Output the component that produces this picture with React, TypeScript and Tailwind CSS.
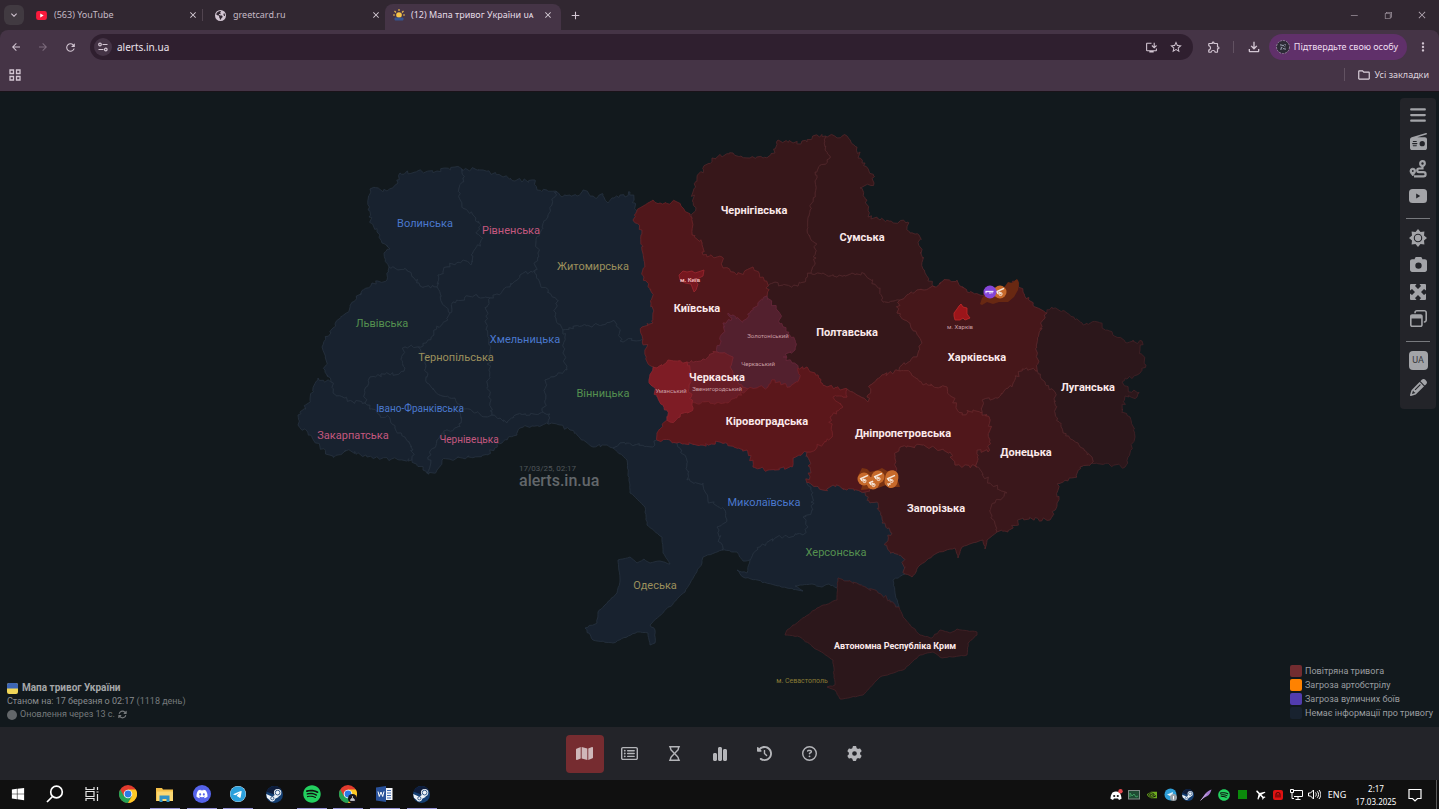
import React from "react";
import {
  FaBars,
  FaCamera,
  FaChartSimple,
  FaClockRotateLeft,
  FaGear,
  FaMap,
  FaPencil,
  FaRadio,
  FaRegCircleQuestion,
  FaRegHourglass,
  FaRegRectangleList,
  FaRegWindowRestore,
  FaRotate,
  FaSpotify,
  FaSteam,
  FaTelegram,
  FaWindows,
  FaDiscord,
  FaEarthAmericas,
} from "react-icons/fa6";
import {
  MdArrowBack,
  MdArrowForward,
  MdClose,
  MdAdd,
  MdExpandMore,
  MdInstallDesktop,
  MdMoreVert,
  MdOutlineExtension,
  MdOutlineFileDownload,
  MdOutlineFolder,
  MdRefresh,
  MdStarBorder,
  MdFlight,
} from "react-icons/md";
import { VscChromeClose, VscChromeMinimize, VscChromeRestore } from "react-icons/vsc";
import { SiNvidia } from "react-icons/si";

/* ---------- Map geometry: shared borders, joined into regions ---------- */

const BORDERS: Record<string, string> = {
  volOut: "462,169 455,167 437,171 415,172 400,173 398,183 387,191 370,189 368,200 369,217 377,232 382,243 390,249 384,253 389,267",
  volLvi: "389,267 398,270 407,270 413,277 420,286 437,287",
  volRiv: "462,169 463,178 459,192 462,207 473,215 481,225 476,233 483,238 473,253 471,265 463,260 447,267 438,275 437,287",
  rivOut: "462,169 483,170 503,177 523,181 535,180 537,190 557,192",
  rivZhy: "557,192 552,205 548,217 540,233 536,240 538,253 535,270",
  rivKhm: "535,270 520,275 510,287 490,298",
  rivTer: "490,298 477,295 453,302 450,313",
  rivLvi: "450,313 442,303 440,293 437,287",
  lviTer: "450,313 448,320 435,330 428,340 418,347",
  lviIf: "418,347 405,347 402,357 405,368 400,373 370,377 366,387 365,403",
  lviZak: "365,403 353,402 333,393 331,382",
  lviOut: "389,267 387,280 372,283 353,302 333,328 322,347 326,360 325,370 331,382",
  zakOut: "331,382 318,378 310,400 298,415 298,425 310,435 320,447 333,457 348,450 367,457 400,460 412,460",
  zakIf: "365,403 380,415 390,418 395,428 405,437 413,450 412,460",
  ifOut: "412,460 423,470 429,474",
  ifChe: "429,474 430,467 428,457 437,440 447,430 460,427 460,409",
  ifTer: "418,347 425,353 427,383 440,395 455,398 460,409",
  cheTer: "460,409 473,412 487,417 492,415",
  terKhm: "490,298 487,307 487,327 490,353 488,380 490,403 492,415",
  cheKhm: "492,415 500,418 507,423 515,415 530,415 543,412",
  cheVin: "543,412 550,414 548,424",
  cheOut: "429,474 437,470 442,460 487,455 497,443 517,435 520,428 532,426 548,424",
  khmVin: "543,412 545,403 545,380 567,370 563,353 565,337 563,330",
  khmZhy: "535,270 540,283 548,293 557,300 555,317 563,330",
  zhyVin: "563,330 587,326 615,322 620,330 620,341 643,339",
  zhyOut: "557,192 562,197 570,195 577,196 583,190 590,196 597,198 603,194 608,203 614,198 620,195 625,197 630,192 635,203 637,211",
  zhyKyi: "637,211 633,220 642,230 642,250 644,277 652,293 653,313 653,323 642,327 643,339",
  vinKyi: "643,339 647,347 646,358 653,370",
  vinUma: "653,370 649,380 657,397 667,410 667,420",
  vinKir: "667,420 657,433 657,440",
  vinOde: "657,440 653,447 620,443 613,448",
  vinOut: "548,424 560,425 570,430 580,438 593,447 607,445 613,448",
  kyiOut: "637,211 648,203 653,200 660,203 677,202 683,208 692,218",
  kyiChn: "692,218 692,235 702,243 703,255 722,257 723,268 737,275 753,267 768,286",
  kyiPol: "768,286 767,296",
  kyiZol: "767,296 758,303 750,313 743,322 733,315 728,313 732,318 723,323 723,333 717,352",
  kyiZve: "717,352 703,359 687,362",
  kyiUma: "687,362 667,362 657,368 653,370",
  umaZve: "687,362 690,370 689,385 692,403",
  umaKir: "692,403 693,408 680,417 670,422 667,420",
  zveKir: "692,403 728,403 738,395 748,389",
  zolZve: "717,352 723,353 733,357 730,367 735,377 743,388 748,389",
  zolPol: "767,296 777,310 783,327 795,342 795,350 783,357 792,363 798,368",
  zolKir: "798,368 800,377 790,387 775,380 768,387 757,388 748,389",
  kirPol: "798,368 807,367 818,375 822,383 827,387 847,389",
  kirDni: "847,389 847,397 833,397 843,407 830,417 832,437 817,447 807,452",
  kirMyk: "807,452 803,453 793,458 792,467 768,470 753,467 747,450 720,442 700,445 677,443",
  kirOde: "677,443 670,440 657,440",
  mykOde: "677,443 687,463 687,480 703,483 708,500 725,510 727,520 717,527 722,550",
  dniMyk: "807,452 810,467 807,483",
  dniKhe: "807,483 823,490 833,485 847,490 865,492",
  mykKhe: "807,483 813,493 813,510 803,517 808,527 803,535 777,537 760,547 750,560",
  mykOut: "722,550 737,552 743,561 750,560",
  odeOut: "722,550 703,557 702,563 685,592 650,625 655,630 655,643 650,645 648,633 637,632 613,643 593,640 585,628 597,623 598,612 617,593 620,580 618,560 630,557 637,563 644,559 650,563 660,561 670,564 663,553 662,537 647,525 645,507 630,493 627,460 613,448",
  kheZap: "865,492 870,503 877,502 882,523 892,533 885,545 890,553 903,558 905,574",
  kheAzo: "905,574 893,580 895,593 899,607",
  kheCri: "899,607 890,602 878,593 860,585 838,578",
  kheOut: "838,578 837,588 829,584 822,587 812,584 795,586 803,591 787,588 743,577 737,570 747,573 750,560",
  criOut: "899,607 903,617 920,635 932,638 940,630 950,633 957,629 977,632 977,635 968,643 967,655 942,658 933,652 920,655 903,670 880,677 863,695 840,699 835,690 827,687 835,685 833,660 813,647 800,637 785,635 787,630 817,608 837,600 838,578",
  chnOut: "692,218 695,207 693,192 697,177 712,158 733,153 750,158 763,158 775,153 778,140 793,143 807,142 817,135 826,136",
  chnSum: "826,136 825,150 830,158 815,172 815,193 810,210 807,230 815,243 815,263 811,273",
  chnPol: "811,273 798,286 783,285 775,282 768,286",
  sumOut: "826,136 847,136 857,147 862,163 873,175 874,183 860,188 867,200 868,217 880,220 907,222 910,233 919,235 920,247 925,273 935,287",
  sumKha: "935,287 917,290 900,300",
  sumPol: "811,273 823,273 837,277 852,273 865,274 880,290 883,302 900,300",
  polKha: "900,300 897,313 910,323 922,343 917,357 902,365 900,371",
  polDni: "900,371 883,375 870,385 868,402 857,395 847,389",
  khaOut: "935,287 943,281 957,280 967,292 980,295 1003,288 1017,280 1023,292 1033,305 1047,313",
  khaDni: "900,371 910,372 923,385 947,387 952,397 962,415 973,410 982,412",
  khaDon: "982,412 982,400 998,398 1013,383 1022,369 1037,370",
  khaLuh: "1037,370 1037,347 1043,320 1047,313",
  luhOut: "1047,313 1052,307 1067,313 1083,325 1098,322 1107,330 1127,343 1142,341 1140,350 1146,365 1137,375 1122,382 1130,392 1139,392 1137,397 1125,396 1122,413 1130,417 1135,437 1128,457 1125,467 1092,463",
  luhDon: "1037,370 1045,383 1055,392 1055,413 1063,433 1080,447 1092,457 1092,463",
  donOut: "1092,463 1080,467 1077,477 1058,483 1057,503 1050,520 1023,518 1008,532 997,532",
  donZap: "997,532 990,510 995,503 1007,493 990,483 977,467",
  dniDon: "982,412 990,420 990,440 988,452 977,450 977,467",
  dniZap: "977,467 955,465 950,452 940,450 923,445 900,447 895,457 895,477 865,492",
  zapOut: "997,532 987,540 985,549 983,540 962,547 958,558 955,548 937,553 920,565 912,577 905,574",
};

const SMOOTH = new Set(["odeOut", "criOut", "kheOut", "zapOut", "mykOut", "kheAzo"]);

type Point = [number, number];

function roughen(name: string): Point[] {
  const points = BORDERS[name].split(" ").map((p) => p.split(",").map(Number) as Point);
  let seed = name.split("").reduce((s, c) => (s * 31 + c.charCodeAt(0)) % 65521, 7);
  const random = () => {
    seed = (seed * 16807) % 2147483647;
    return seed / 2147483647 - 0.5;
  };
  const size = SMOOTH.has(name) ? 1.2 : 4;
  const out: Point[] = [points[0]];
  for (let i = 1; i < points.length; i++) {
    const [ax, ay] = points[i - 1];
    const [bx, by] = points[i];
    const steps = Math.max(1, Math.round(Math.hypot(bx - ax, by - ay) / 2.5));
    for (let k = 1; k < steps; k++) {
      const t = k / steps;
      out.push([ax + (bx - ax) * t + random() * size, ay + (by - ay) * t + random() * size]);
    }
    out.push([bx, by]);
  }
  return out;
}

const LINES = Object.fromEntries(Object.keys(BORDERS).map((name) => [name, roughen(name)]));

function ring(names: string): string {
  const all = names
    .split(" ")
    .flatMap((n) => (n.startsWith("-") ? [...LINES[n.slice(1)]].reverse() : LINES[n]));
  return "M" + all.map(([x, y]) => `${x.toFixed(1)} ${y.toFixed(1)}`).join("L") + "Z";
}

const CALM = "#18222f";
const CALM_LINE = "#273240";

const REGIONS: { id: string; fill: string; line: string; borders: string }[] = [
  { id: "volyn", fill: CALM, line: CALM_LINE, borders: "volOut volLvi -volRiv" },
  { id: "rivne", fill: CALM, line: CALM_LINE, borders: "rivOut rivZhy rivKhm rivTer rivLvi -volRiv" },
  { id: "lviv", fill: CALM, line: CALM_LINE, borders: "lviOut -lviZak -lviIf -lviTer rivLvi -volLvi" },
  { id: "zakarpattia", fill: CALM, line: CALM_LINE, borders: "zakOut -zakIf lviZak" },
  { id: "ivano-frankivsk", fill: CALM, line: CALM_LINE, borders: "ifOut ifChe -ifTer lviIf zakIf" },
  { id: "ternopil", fill: CALM, line: CALM_LINE, borders: "rivTer lviTer ifTer cheTer -terKhm" },
  { id: "chernivtsi", fill: CALM, line: CALM_LINE, borders: "cheOut -cheVin -cheKhm -cheTer -ifChe" },
  { id: "khmelnytskyi", fill: CALM, line: CALM_LINE, borders: "rivKhm terKhm cheKhm khmVin -khmZhy" },
  { id: "zhytomyr", fill: CALM, line: CALM_LINE, borders: "zhyOut zhyKyi -zhyVin -khmZhy -rivZhy" },
  { id: "vinnytsia", fill: CALM, line: CALM_LINE, borders: "zhyVin vinKyi vinUma vinKir vinOde -vinOut -cheVin khmVin" },
  { id: "odesa", fill: CALM, line: CALM_LINE, borders: "kirOde vinOde -odeOut -mykOde" },
  { id: "mykolaiv", fill: CALM, line: CALM_LINE, borders: "kirMyk mykOde mykOut -mykKhe -dniMyk" },
  { id: "kherson", fill: CALM, line: CALM_LINE, borders: "mykKhe -kheOut -kheCri -kheAzo -kheZap -dniKhe" },
  { id: "crimea", fill: "#2c171b", line: "#452227", borders: "kheCri -criOut" },
  { id: "luhansk", fill: "#2c171b", line: "#452227", borders: "luhOut -luhDon khaLuh" },
  { id: "poltava", fill: "#35171a", line: "#52272b", borders: "sumPol polKha polDni -kirPol -zolPol -kyiPol -chnPol" },
  { id: "sumy", fill: "#35171a", line: "#52272b", borders: "sumOut sumKha -sumPol -chnSum" },
  { id: "chernihiv", fill: "#37171a", line: "#52272b", borders: "chnOut chnSum chnPol -kyiChn" },
  { id: "zaporizhzhia", fill: "#3a171b", line: "#53272b", borders: "kheZap -zapOut donZap dniZap" },
  { id: "donetsk", fill: "#3a171b", line: "#53272b", borders: "luhDon donOut donZap -dniDon khaDon" },
  { id: "kharkiv", fill: "#46171a", line: "#5d272b", borders: "khaOut -khaLuh -khaDon -khaDni -polKha -sumKha" },
  { id: "dnipro", fill: "#50171b", line: "#67262a", borders: "khaDni dniDon dniZap -dniKhe -dniMyk -kirDni -polDni" },
  { id: "kyiv", fill: "#50171b", line: "#6c2327", borders: "kyiOut kyiChn kyiPol kyiZol kyiZve kyiUma -vinKyi -zhyKyi" },
  { id: "cherkasy-east", fill: "#53202e", line: "#66263a", borders: "kyiZol zolZve -zolKir -zolPol" },
  { id: "zvenyhorodka", fill: "#671d26", line: "#7a2630", borders: "kyiZve umaZve zveKir -zolZve" },
  { id: "kirovohrad", fill: "#5b171b", line: "#752127", borders: "kirPol kirDni kirMyk kirOde -vinKir -umaKir zveKir -zolKir" },
  { id: "uman", fill: "#7e1c25", line: "#8e242d", borders: "vinUma -umaKir -umaZve kyiUma" },
];

const BLUE = "#4a78cd";
const PINK = "#c4587f";
const SAND = "#9c905c";
const GREEN = "#55914f";

const QUIET_LABELS: [string, number, number, string, string][] = [
  ["Волинська", 425, 227, BLUE, "text-[11px]"],
  ["Рівненська", 511, 234, PINK, "text-[11px]"],
  ["Житомирська", 593, 270, SAND, "text-[11px]"],
  ["Львівська", 382, 327, GREEN, "text-[11px]"],
  ["Хмельницька", 525, 343, BLUE, "text-[11px]"],
  ["Тернопільська", 456, 361, SAND, "text-[11px]"],
  ["Вінницька", 603, 397, GREEN, "text-[11px]"],
  ["Івано-Франківська", 420, 412, BLUE, "text-[10px]"],
  ["Закарпатська", 353, 439, PINK, "text-[11px]"],
  ["Чернівецька", 469, 443, PINK, "text-[10px]"],
  ["Миколаївська", 764, 506, BLUE, "text-[11px]"],
  ["Херсонська", 836, 556, GREEN, "text-[11px]"],
  ["Одеська", 655, 589, SAND, "text-[11px]"],
  ["м. Севастополь", 802, 683, "#8a7b35", "text-[7px]"],
];

const ALERT_LABELS: [string, number, number][] = [
  ["Чернігівська", 754, 214],
  ["Сумська", 862, 241],
  ["Київська", 697, 312],
  ["Полтавська", 847, 336],
  ["Харківська", 977, 361],
  ["Черкаська", 717, 381],
  ["Луганська", 1088, 391],
  ["Кіровоградська", 767, 425],
  ["Дніпропетровська", 903, 437],
  ["Донецька", 1026, 456],
  ["Запорізька", 936, 512],
];

const SMALL_LABELS: [string, number, number][] = [
  ["Золотоніський", 768, 338],
  ["Черкаський", 758, 366],
  ["Звенигородський", 717, 391],
  ["Уманський", 671, 393],
  ["м. Харків", 960, 329],
];

const APP_FONT = "font-['Roboto','Noto_Sans',sans-serif]";

function Cannon({ x, y, color = "#c76a2b", tall = false }: { x: number; y: number; color?: string; tall?: boolean }) {
  return (
    <g transform={`translate(${x} ${y})`}>
      {tall ? (
        <rect x="-6" y="-9" width="13" height="18" rx="6.5" fill={color} transform="rotate(12)" />
      ) : (
        <circle r="6.5" fill={color} />
      )}
      <path d="M-4 0L4-3.600M-3-1L-2 2M-1 0L1 2" stroke="#f6e6da" strokeWidth="1.500" fill="none" />
      <circle cx="0.500" cy="2" r="1.600" stroke="#f6e6da" fill="none" />
      {tall && <path d="M-4 5h4M-3 7l2-3" stroke="#f6e6da" fill="none" />}
    </g>
  );
}

function AlertMap() {
  return (
    <svg
      viewBox="0 92 1439 635"
      preserveAspectRatio="xMidYMid meet"
      className={`block h-full w-full ${APP_FONT}`}
      role="img"
      aria-label="Мапа тривог України"
    >
      {REGIONS.map((r) => (
        <path key={r.id} d={ring(r.borders)} fill={r.fill} stroke={r.line} strokeWidth="0.800" strokeLinejoin="round" />
      ))}
      <path
        d="M679 275l4-4 4 1 5-1 3 2 6-2 3-1-1 6-6 3-2 2 3 3-2 6-2 2-3-8-6-1-5-3z"
        fill="#76171f"
        stroke="#9a2730"
        strokeWidth="0.800"
      />
      <path d="M954 313l3-4 2-3 2-2 2 3 4 1v6l3 4-5 2-2-2-3 2-5 0-1-4z" fill="#9c151a" stroke="#c22a2a" strokeWidth="0.800" />
      <path d="M980 304l2-6 5-5 16-4 5-7 4 1 5-4 2 4-1 7-4 7-6 5-9 0-6 2-6-2-5 3z" fill="#682812" />
      <path d="M862 468l5 1 3 3 8-2 4-2 5 3 7 1 3 6 3 9-7 0-7-2-8 3-8 1-9 1 2-8-5-6z" fill="#7a3212" />
      <Cannon x={1000} y={292} />
      <g transform="translate(990 292)">
        <circle r="6.500" fill="#8546d8" />
        <path d="M-4.500-.500h8" stroke="#efe6fb" strokeWidth="1.300" fill="none" />
        <path d="M-4-.500v1.800M0 0v2M2 0v1.500" stroke="#efe6fb" fill="none" />
      </g>
      <Cannon x={864} y={479} />
      <Cannon x={873} y={483} />
      <Cannon x={878} y={477} />
      <Cannon x={891} y={479} tall />

      <g textAnchor="middle">
        {QUIET_LABELS.map(([text, x, y, color, size]) => (
          <text key={text} x={x} y={y} fill={color} className={size}>
            {text}
          </text>
        ))}
        {SMALL_LABELS.map(([text, x, y]) => (
          <text key={text} x={x} y={y} fill="#c99ea4" className="text-[6px]">
            {text}
          </text>
        ))}
        <text x="690" y="282" fill="#efb3b6" className="text-[6px] font-bold">
          м. Київ
        </text>
        {ALERT_LABELS.map(([text, x, y]) => (
          <text key={text} x={x} y={y} fill="#fbe9ea" className="text-[11px] font-bold">
            {text}
          </text>
        ))}
        <text x="895" y="649" fill="#fbe9ea" className="text-[9px] font-bold">
          Автономна Республіка Крим
        </text>
      </g>
      <text x="519" y="471" fill="#50565a" className="text-[8px]">
        17/03/25, 02:17
      </text>
      <text x="519" y="486" fill="#62676b" className="text-[16px] font-medium">
        alerts.in.ua
      </text>
    </svg>
  );
}

/* ---------- Browser frame ---------- */

function Sunrise() {
  return (
    <svg viewBox="0 0 12 12" className="size-3">
      <path d="M6 0v2M1.500 2l1.500 1.500M10.500 2L9 3.500M0 6h2M10 6h2" stroke="#e7b64c" strokeWidth="1.200" />
      <circle cx="6" cy="6" r="2.800" fill="#f7c548" />
      <rect x="1.500" y="8.500" width="9" height="3" rx="1" fill="#36548f" />
    </svg>
  );
}

function Tab({ icon, title, active = false, width }: { icon: React.ReactNode; title: string; active?: boolean; width: string }) {
  return (
    <div className={`flex h-full items-center pb-1 ${width} ${active ? "rounded-t-lg bg-[#453446] px-2" : "pl-2 pr-1"}`}>
      <span className={`flex shrink-0 items-center ${active ? "w-[18px]" : "w-[22px]"}`}>{icon}</span>
      <span className={`flex-1 whitespace-nowrap text-[9px] ${active ? "text-[#e4dbe4]" : "text-[#c5bac5]"}`}>{title}</span>
      <button aria-label={`Закрити ${title}`} className="text-[#ddd4dd]">
        <MdClose className="size-[10px]" />
      </button>
    </div>
  );
}

function BrowserFrame() {
  return (
    <header className="shrink-0 bg-[#312731] font-['Noto_Sans','Open_Sans',sans-serif] text-[#d3c6d3]">
      <div className="flex h-[30px] items-center pl-1">
        <button aria-label="Пошук вкладок" className="flex size-5 items-center justify-center rounded-md bg-[#413a41]">
          <MdExpandMore className="size-3" />
        </button>
        <div className="flex h-full flex-1 items-center pt-1">
          <Tab
            width="w-[178px]"
            title="(563) YouTube"
            icon={
              <svg viewBox="0 0 12 10" className="ml-1 h-[9px] w-[11px]">
                <rect width="12" height="10" rx="2.500" fill="#fa1a3c" />
                <path d="M4.600 2.800v4.400L8.400 5z" fill="#fff" />
              </svg>
            }
          />
          <span className="mb-1 h-3 w-px bg-[#51444f]" />
          <Tab width="w-[182px]" title="greetcard.ru" icon={<FaEarthAmericas className="ml-1 size-[11px]" />} />
          <Tab active width="w-[176px]" title="(12) Мапа тривог України ᴜᴀ" icon={<Sunrise />} />
          <button aria-label="Нова вкладка" className="mb-1 ml-2">
            <MdAdd className="size-[13px]" />
          </button>
        </div>
        <div className="flex items-center gap-6 pr-3 text-[#b6abb6]">
          <button aria-label="Згорнути"><VscChromeMinimize className="size-[10px]" /></button>
          <button aria-label="Відновити"><VscChromeRestore className="size-[10px]" /></button>
          <button aria-label="Закрити"><VscChromeClose className="size-[10px]" /></button>
        </div>
      </div>

      <div className="flex h-[34px] items-center rounded-t-lg bg-[#453446]">
        <div className="flex items-center gap-[15px] pl-[10px] pr-[13px]">
          <button aria-label="Назад"><MdArrowBack className="size-3" /></button>
          <button aria-label="Вперед" className="text-[#7c6b7c]"><MdArrowForward className="size-3" /></button>
          <button aria-label="Оновити"><MdRefresh className="size-[13px]" /></button>
        </div>
        <div className="flex h-[26px] flex-1 items-center rounded-full bg-[#2f1f2f] pl-1 pr-[10px]">
          <button aria-label="Відомості про сайт" className="flex size-[18px] items-center justify-center rounded-full bg-[#453446]">
            <svg viewBox="0 0 10 10" className="size-[10px]" fill="none" stroke="currentColor" strokeWidth="1.200">
              <circle cx="2" cy="2.500" r="1.300" />
              <path d="M4.500 2.500H9.500M.5 7.500h5" />
              <circle cx="7.800" cy="7.500" r="1.300" />
            </svg>
          </button>
          <input
            aria-label="Адреса"
            defaultValue="alerts.in.ua"
            className="ml-[5px] min-w-0 flex-1 bg-transparent text-[10px] text-[#ebe2eb] outline-none"
          />
          <button aria-label="Встановити" className="mr-[11px]"><MdInstallDesktop className="size-[13px]" /></button>
          <button aria-label="Додати закладку"><MdStarBorder className="size-[14px]" /></button>
        </div>
        <button aria-label="Розширення" className="ml-[14px]"><MdOutlineExtension className="size-[14px]" /></button>
        <span className="ml-3 h-3 w-px bg-[#625262]" />
        <button aria-label="Завантаження" className="ml-3"><MdOutlineFileDownload className="size-4" /></button>
        <button className="ml-[7px] flex h-[26px] items-center gap-1 rounded-full bg-[#60306a] pl-[7px] pr-[9px] text-[9px] text-[#efdff1]">
          <svg viewBox="0 0 14 14" className="size-[14px]">
            <circle cx="7" cy="7" r="6.500" fill="#2c2a35" stroke="#8f7f97" strokeDasharray="2 1" />
            <path d="M4 4l3 1 3-1-1 3 1 3-3-1-3 1 1-3z" fill="#8d93a3" />
            <path d="M5 6l4 2M6 9l3-4" stroke="#1c1b22" />
          </svg>
          Підтвердьте свою особу
        </button>
        <button aria-label="Меню" className="ml-[9px] mr-[9px]"><MdMoreVert className="size-[14px]" /></button>
      </div>

      <div className="flex h-7 items-center justify-between border-b border-[#1a1319] bg-[#453446] pb-[6px] pl-[9px] pr-[10px]">
        <button aria-label="Групи вкладок">
          <svg viewBox="0 0 12 12" className="size-3" fill="none" stroke="currentColor" strokeWidth="1.300">
            <path d="M1 1h3.500v3.500H1zM7.500 1H11v3.500H7.500zM1 7.500h3.500V11H1zM7.500 7.500H11V11H7.500z" />
          </svg>
        </button>
        <div className="flex items-center">
          <span className="mr-3 h-[13px] w-px bg-[#625262]" />
          <button className="flex items-center gap-1 text-[9px] text-[#ddd2dd]">
            <MdOutlineFolder className="size-[14px]" />
            Усі закладки
          </button>
        </div>
      </div>
    </header>
  );
}

/* ---------- Page overlays ---------- */

function SideBar() {
  const button = "flex h-[27px] w-full items-center justify-center";
  return (
    <aside className="absolute right-[3px] top-[6px] flex w-9 flex-col items-center rounded-sm bg-[#232429] pb-2 pt-[3px] text-[#a3a4a8]">
      <button aria-label="Меню" className={button}>
        <FaBars className="size-[18px]" />
      </button>
      <button aria-label="Радіо" className={button}><FaRadio className="size-[17px]" /></button>
      <button aria-label="Маршрут" className={button}>
        <svg viewBox="0 0 18 18" className="size-[18px]" fill="none" stroke="currentColor" strokeWidth="2.200">
          <circle cx="13.500" cy="3.500" r="2.300" />
          <path d="M13.500 6v2.500H10a1.800 1.800 0 000 3.600h4.500a2 2 0 010 4.200H5" />
          <path d="M3.800 16C1.800 13.500 1 12.300 1 11a2.800 2.800 0 015.600 0c0 1.300-.8 2.500-2.800 5z" fill="currentColor" strokeWidth=".8" />
          <circle cx="3.800" cy="11" r=".9" fill="#232429" stroke="none" />
        </svg>
      </button>
      <button aria-label="Відео" className={button}>
        <svg viewBox="0 0 18 14" className="h-[14px] w-[18px]">
          <rect width="18" height="14" rx="3.500" fill="currentColor" />
          <path d="M7.200 4.600v4.800l4-2.400z" fill="#232429" />
        </svg>
      </button>
      <hr className="mb-[5px] mt-[9px] w-6 border-[#77797d]" />
      <button aria-label="Тема" className={button}>
        <svg viewBox="-9 -9 18 18" className="size-[18px]">
          <path
            d="M0-9L2.500-6 6.400-6.400 6-2.500 9 0 6 2.500 6.400 6.400 2.500 6 0 9-2.500 6-6.400 6.400-6 2.500-9 0-6-2.500-6.400-6.400-2.500-6z"
            fill="currentColor"
          />
          <circle r="3.700" fill="none" stroke="#232429" strokeWidth="1.100" />
        </svg>
      </button>
      <button aria-label="Знімок" className={button}><FaCamera className="size-[17px]" /></button>
      <button aria-label="На весь екран" className={button}>
        <svg viewBox="0 0 16 16" className="size-4" fill="currentColor">
          <path d="M0 1a1 1 0 011-1h5.500L5 2l3 3 3-3L9.500 0H15a1 1 0 011 1v5.500L14 5l-3 3 3 3 2-1.500V15a1 1 0 01-1 1H9.500l1.500-2-3-3-3 3 1.500 2H1a1 1 0 01-1-1V9.500L2 11l3-3-3-3L0 6.500z" />
          <path d="M8 5.500L5.500 8 8 10.500 10.500 8z" />
        </svg>
      </button>
      <button aria-label="Нове вікно" className={button}><FaRegWindowRestore className="size-[17px]" /></button>
      <hr className="mb-[5px] mt-[9px] w-6 border-[#77797d]" />
      <button className="my-1 flex size-[19px] items-center justify-center rounded-sm bg-[#a3a4a8] font-['Roboto',sans-serif] text-[9px] text-[#37383c]">
        UA
      </button>
      <button aria-label="Редагувати" className={button}><FaPencil className="size-[17px]" /></button>
    </aside>
  );
}

function Status() {
  return (
    <section className={`absolute bottom-[6px] left-[7px] ${APP_FONT} text-[9px] leading-[13px] text-[#75797c]`}>
      <h1 className="flex items-center gap-1 text-[10px] font-bold leading-[14px] text-[#a5a7a9]">
        <svg viewBox="0 0 11 11" className="size-[11px]">
          <rect width="11" height="11" rx="2" fill="#f1d658" />
          <path d="M2 0h7a2 2 0 012 2v3.500H0V2a2 2 0 012-2z" fill="#3d66b5" />
        </svg>
        Мапа тривог України
      </h1>
      <p>
        <span className="text-[#898c8f]">Станом на: 17 березня о 02:17</span> (1118 день)
      </p>
      <p className="flex items-center gap-[3px]">
        <span className="size-[10px] rounded-full bg-[#63676a]" />
        Оновлення через 13 с.
        <FaRotate className="size-[9px]" />
      </p>
    </section>
  );
}

function Legend() {
  const rows = [
    ["bg-[#722c30]", "Повітряна тривога"],
    ["bg-[#ff8200]", "Загроза артобстрілу"],
    ["bg-[#523cae]", "Загроза вуличних боїв"],
    ["bg-[#18222f]", "Немає інформації про тривогу"],
  ];
  return (
    <ul className={`absolute bottom-[7px] right-[6px] ${APP_FONT} text-[9px] leading-[14px] text-[#9a9da0]`}>
      {rows.map(([color, text]) => (
        <li key={text} className="flex items-center gap-[3px]">
          <span className={`h-3 w-3 rounded-[2px] ${color}`} />
          {text}
        </li>
      ))}
    </ul>
  );
}

function BottomNav() {
  const items: [string, React.ReactNode][] = [
    ["Мапа", <FaMap key="i" className="size-[17px]" />],
    ["Список", <FaRegRectangleList key="i" className="size-[17px]" />],
    ["Тривалість", <FaRegHourglass key="i" className="size-[15px]" />],
    ["Статистика", <FaChartSimple key="i" className="size-[16px]" />],
    ["Історія", <FaClockRotateLeft key="i" className="size-[15px]" />],
    ["Довідка", <FaRegCircleQuestion key="i" className="size-[15px]" />],
    ["Налаштування", <FaGear key="i" className="size-[15px]" />],
  ];
  return (
    <nav className="flex h-[53px] shrink-0 items-center justify-center gap-[7px] bg-[#232429]">
      {items.map(([name, icon], i) => (
        <button
          key={name}
          aria-label={name}
          className={`flex size-[38px] items-center justify-center rounded-sm ${
            i === 0 ? "bg-[#762c30] text-[#cfb7b9]" : "text-[#b4b5b9]"
          }`}
        >
          {icon}
        </button>
      ))}
    </nav>
  );
}

/* ---------- Windows taskbar ---------- */

function ChromeLogo({ badge = false }: { badge?: boolean }) {
  return (
    <svg viewBox="0 0 18 18" className="size-[18px]">
      <circle cx="9" cy="9" r="9" fill="#e33b2e" />
      <path d="M1.200 4.500A9 9 0 009 18l4-6.700H5z" fill="#23a455" />
      <path d="M16.800 4.500A9 9 0 019 18l4-6.700L9 4.500z" fill="#fdc925" />
      <circle cx="9" cy="9" r="4.300" fill="#fff" />
      <circle cx="9" cy="9" r="3.400" fill="#2d7be5" />
      {badge && (
        <>
          <circle cx="13.500" cy="13.500" r="4.500" fill="#17141c" />
          <path d="M11.500 15.500c0-3 4-3 4 0zM13.500 11v2" stroke="#c9c9ce" strokeWidth=".8" fill="#c9c9ce" />
        </>
      )}
    </svg>
  );
}

function SteamLogo({ size }: { size: string }) {
  return (
    <svg viewBox="0 0 18 18" className={size}>
      <circle cx="9" cy="9" r="9" fill="#143f73" />
      <path d="M.6 6A9 9 0 0116 3.400L9 9z" fill="#0e1c3a" />
      <path d="M.2 8.500l6.500 2.800 3.800-2.500 3.300 2.500-4 2.300a3.200 3.200 0 01-6 1.200L1 12.500z" fill="#eef3f8" />
      <circle cx="12.300" cy="7" r="3.900" fill="#eef3f8" />
      <circle cx="12.300" cy="7" r="2.500" fill="#eef3f8" stroke="#143f73" strokeWidth=".9" />
      <circle cx="6.700" cy="13" r="1.700" fill="none" stroke="#143f73" strokeWidth=".8" />
    </svg>
  );
}

function Taskbar() {
  const apps: [string, boolean, React.ReactNode][] = [
    ["Пуск", false, <FaWindows key="i" className="size-[14px] text-white" />],
    [
      "Пошук",
      false,
      <svg key="i" viewBox="0 0 18 18" className="size-[18px]" fill="none" stroke="#fff" strokeWidth="1.700">
        <circle cx="10.500" cy="7" r="5.800" />
        <path d="M6.500 11.500L1 17" />
      </svg>,
    ],
    [
      "Подання завдань",
      false,
      <svg key="i" viewBox="0 0 14 14" className="size-[14px]" fill="none" stroke="#e6e6e6" strokeWidth="1.200">
        <path d="M1 0v2.500h8V0M1 14v-2.500h8V14M1 4.500h8v5H1zM12.500 0v3M12.500 7v7M11.500 5h2" />
      </svg>,
    ],
    ["Chrome", false, <ChromeLogo key="i" />],
    [
      "Провідник",
      true,
      <svg key="i" viewBox="0 0 17 15" className="h-[15px] w-[17px]">
        <path d="M0 1h6l1 1.500h10V14H0z" fill="#f5c14a" />
        <path d="M1 4.500h16V14H1z" fill="#fbd873" />
        <path d="M3.500 8.500h10V15h-3v-3H6.500v3h-3z" fill="#3192c6" />
      </svg>,
    ],
    [
      "Discord",
      true,
      <span key="i" className="flex size-[18px] items-center justify-center rounded-full bg-[#5563ea] text-white">
        <FaDiscord className="size-[12px]" />
      </span>,
    ],
    [
      "Telegram",
      true,
      <span key="i" className="rounded-full bg-white text-[#2ba0dc]">
        <FaTelegram className="size-4" />
      </span>,
    ],
    ["Steam", false, <SteamLogo key="i" size="size-[17px]" />],
    ["Spotify", true, <FaSpotify key="i" className="size-[18px] text-[#23d05f]" />],
    ["Chrome, профіль", true, <ChromeLogo key="i" badge />],
    [
      "Word",
      true,
      <svg key="i" viewBox="0 0 17 16" className="h-4 w-[17px]">
        <path d="M8 2h8.500v12H8z" fill="#f4f6fa" />
        <path d="M11 4.500h4M11 7h4M11 9.500h4M11 12h4" stroke="#3f68b2" />
        <path d="M0 1.500L10 0v16L0 14.500z" fill="#29519a" />
        <path d="M2 5.500l1.300 5L5 6l1.700 4.500L8 5.500" stroke="#fff" fill="none" />
      </svg>,
    ],
    ["Steam, вікно", true, <SteamLogo key="i" size="size-[17px]" />],
  ];

  const tray: [string, React.ReactNode][] = [
    [
      "Discord",
      <svg key="i" viewBox="0 0 13 12" className="h-3 w-[13px]">
        <path d="M2.500 3.500C5 2.300 7 2.300 9.500 3.500c1.300 2 2 4 2 6.300L9 11l-1-1.500H4L3 11 .5 9.800c0-2.300.7-4.300 2-6.300z" fill="#fff" />
        <circle cx="4.200" cy="7" r="1.100" fill="#101010" />
        <circle cx="7.800" cy="7" r="1.100" fill="#101010" />
        <circle cx="10.500" cy="2.200" r="2.200" fill="#e5484d" />
      </svg>,
    ],
    [
      "Монітор",
      <svg key="i" viewBox="0 0 12 10" className="h-[10px] w-3">
        <rect x=".5" y=".5" width="11" height="8.500" fill="#1e4b32" stroke="#7f8a85" />
        <path d="M2 7V3l2 3 2-2 2 3 2-1" stroke="#3c9a5f" fill="none" />
      </svg>,
    ],
    ["NVIDIA", <SiNvidia key="i" className="size-[10px] text-[#6fae1e]" />],
    [
      "Telegram",
      <svg key="i" viewBox="0 0 13 13" className="size-[13px]">
        <circle cx="6.500" cy="6.500" r="6" fill="#2f9fd8" />
        <path d="M3 6.500l6-2.500-1 5z" fill="#e6f4fb" />
        <circle cx="9.500" cy="9.500" r="3.500" fill="#9aa3aa" />
        <path d="M9.500 8v3.500" stroke="#fff" />
      </svg>,
    ],
    ["Steam", <SteamLogo key="i" size="size-[12px]" />],
    [
      "Перо",
      <svg key="i" viewBox="0 0 12 12" className="size-3">
        <path d="M1 11L5 5c2-2.500 4-3.500 6.500-4.500C10.500 4 9 7 4.500 8.500z" fill="#a67bd0" />
        <path d="M.5 11.500l6-6.500" stroke="#d9c4ee" strokeWidth=".8" />
      </svg>,
    ],
    ["Spotify", <FaSpotify key="i" className="size-[12px] text-[#23d05f]" />],
    ["Зелений індикатор", <span key="i" className="size-[9px] bg-[#0b8a0b]" />],
    ["Літак", <MdFlight key="i" className="size-[13px] -rotate-45 text-white" />],
    [
      "AMD",
      <svg key="i" viewBox="0 0 10 10" className="size-[10px]">
        <rect width="10" height="10" rx="2" fill="#e01212" />
        <path d="M3 7.500V4.500a2 2 0 014 0v3M5 4.500v3" stroke="#5a0606" strokeWidth="1.200" fill="none" />
      </svg>,
    ],
    [
      "Мережа",
      <svg key="i" viewBox="0 0 13 11" className="h-[11px] w-[13px]" fill="none" stroke="#fff">
        <path d="M4 1.500h8.500v6H4M8 7.500V10M5.500 10.500h5M.5.500h3v3h-3zM2 3.500v6h2" />
      </svg>,
    ],
    [
      "Гучність",
      <svg key="i" viewBox="0 0 13 11" className="h-[11px] w-[13px]" fill="none" stroke="#fff">
        <path d="M.5 4H2.500L5.500 1v9L2.500 7H.500zM7.500 3.500c1 1.200 1 2.800 0 4M9.300 2.300c1.700 2 1.700 4.400 0 6.400M11 1c2.300 2.700 2.300 6.300 0 9" />
      </svg>,
    ],
  ];

  return (
    <footer className="flex h-[29px] shrink-0 items-stretch justify-between bg-[#101010] font-['Noto_Sans','Open_Sans',sans-serif] text-white">
      <div className="grid w-[440px] grid-cols-12">
        {apps.map(([name, open, icon]) => (
          <button key={name} aria-label={name} className="flex flex-col items-center">
            <span className="flex flex-1 items-center">{icon}</span>
            <span className={`h-px w-[30px] ${open ? "bg-[#9593d4]" : "bg-transparent"}`} />
          </button>
        ))}
      </div>
      <div className="flex items-center">
        <div className="grid w-[216px] grid-cols-12">
          {tray.map(([name, icon]) => (
            <button key={name} aria-label={name} className="flex items-center justify-center">
              {icon}
            </button>
          ))}
        </div>
        <button className="w-7 text-center text-[9px]">ENG</button>
        <button className="w-[50px] text-center text-[8px] leading-[13px]">
          <span className="block">2:17</span>
          <span className="block">17.03.2025</span>
        </button>
        <button aria-label="Сповіщення" className="ml-[7px] mr-[14px]">
          <svg viewBox="0 0 14 14" className="size-[14px]" fill="none" stroke="#fff" strokeWidth="1.200">
            <path d="M1 1.500h12v9H9.500L7 13l-2.500-2.500H1z" />
          </svg>
        </button>
        <span className="mr-[2px] h-full w-px bg-[#5a5a5a]" />
      </div>
    </footer>
  );
}

export default function App() {
  return (
    <div className="flex h-screen min-w-0 flex-col overflow-hidden bg-[#12191d]">
      <BrowserFrame />
      <main className="relative min-h-0 flex-1">
        <AlertMap />
        <SideBar />
        <Status />
        <Legend />
      </main>
      <BottomNav />
      <Taskbar />
    </div>
  );
}
